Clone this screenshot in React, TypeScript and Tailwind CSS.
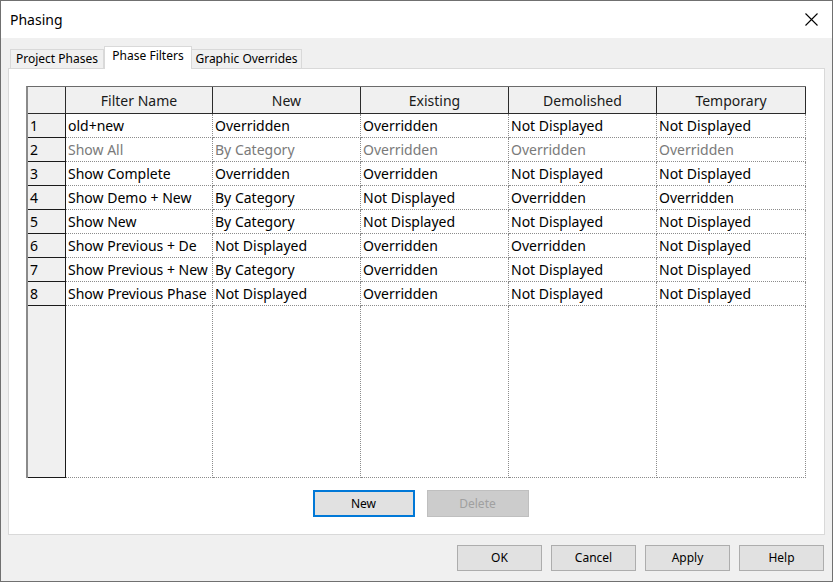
import React from 'react'

type Row = { name: string; cells: string[]; muted?: boolean }

const rows: Row[] = [
  { name: 'old+new', cells: ['Overridden', 'Overridden', 'Not Displayed', 'Not Displayed'] },
  { name: 'Show All', cells: ['By Category', 'Overridden', 'Overridden', 'Overridden'], muted: true },
  { name: 'Show Complete', cells: ['Overridden', 'Overridden', 'Not Displayed', 'Not Displayed'] },
  { name: 'Show Demo + New', cells: ['By Category', 'Not Displayed', 'Overridden', 'Overridden'] },
  { name: 'Show New', cells: ['By Category', 'Not Displayed', 'Not Displayed', 'Not Displayed'] },
  { name: 'Show Previous + De', cells: ['Not Displayed', 'Overridden', 'Overridden', 'Not Displayed'] },
  { name: 'Show Previous + New', cells: ['By Category', 'Overridden', 'Not Displayed', 'Not Displayed'] },
  { name: 'Show Previous Phase', cells: ['Not Displayed', 'Overridden', 'Not Displayed', 'Not Displayed'] },
]

const headers = ['Filter Name', 'New', 'Existing', 'Demolished', 'Temporary']

function DialogButton({ label }: { label: string }) {
  return (
    <button className="w-[85px] h-[26px] bg-[#e1e1e1] border border-[#adadad] text-[12px] text-black">
      {label}
    </button>
  )
}

export default function App() {
  return (
    <div
      className="w-[833px] h-[582px] bg-[#f0f0f0] border border-[#707070] flex flex-col overflow-hidden"
      style={{ fontFamily: '"Noto Sans", "Segoe UI", sans-serif' }}
    >
      {/* Title bar */}
      <div className="h-[37px] bg-white flex items-center justify-between pl-[9px] pr-[14px] shrink-0">
        <span className="text-[14px] text-black">Phasing</span>
        <svg width="13" height="13" viewBox="0 0 13 13" className="text-black">
          <path d="M0.5 0.5 L12.5 12.5 M12.5 0.5 L0.5 12.5" stroke="currentColor" strokeWidth="1.1" />
        </svg>
      </div>

      <div className="px-[7px] flex flex-col">
        {/* Tabs */}
        <div className="h-[30px] flex items-end pl-[2px] text-[12px] text-black">
          <div className="h-[19px] w-[94px] bg-[#f0f0f0] border border-b-0 border-[#d9d9d9] flex items-center justify-center">
            Project Phases
          </div>
          <div className="relative z-10 h-[23px] w-[88px] -mb-px bg-white border border-b-0 border-[#d9d9d9] flex items-start justify-center">
            Phase Filters
          </div>
          <div className="h-[19px] w-[110px] bg-[#f0f0f0] border border-b-0 border-l-0 border-[#d9d9d9] flex items-center justify-center">
            Graphic Overrides
          </div>
        </div>

        {/* Tab panel */}
        <div className="h-[467px] bg-white border border-[#d9d9d9] pt-[17px] pl-[17px] flex flex-col">
          <div className="w-[780px] h-[392px] border-t border-l-2 border-t-[#6b6b6b] border-l-[#8a8a8a] grid grid-cols-[38px_147px_148px_148px_148px_149px] grid-rows-[27px_repeat(8,24px)_1fr] text-[14px]">
            <div className="bg-[#f0f0f0] border-r border-b border-[#2b2b2b]" />
            {headers.map((h) => (
              <div
                key={h}
                className="bg-[#f0f0f0] border-r border-b border-[#2b2b2b] flex items-center justify-center text-[#1a1a1a]"
              >
                {h}
              </div>
            ))}

            {rows.map((row, i) => (
              <React.Fragment key={row.name}>
                <div className="bg-[#f0f0f0] border-r border-b border-[#1a1a1a] flex items-center pl-[2px] text-black">
                  {i + 1}
                </div>
                {[row.name, ...row.cells].map((c, j) => (
                  <div
                    key={j}
                    className={`border-r border-b border-dotted border-[#8c8c8c] flex items-center pl-[2px] whitespace-nowrap overflow-hidden ${
                      row.muted ? 'text-[#7a7a7a]' : 'text-black'
                    }`}
                  >
                    {c}
                  </div>
                ))}
              </React.Fragment>
            ))}

            <div className="bg-[#f0f0f0] border-r border-b border-[#1a1a1a]" />
            {headers.map((h) => (
              <div key={h} className="border-r border-b border-dotted border-[#8c8c8c]" />
            ))}
          </div>

          <div className="flex justify-center gap-[12px] mt-[12px] pr-[9px]">
            <button className="w-[102px] h-[27px] bg-[#e1e1e1] border-2 border-[#0078d7] text-[12px] text-black">
              New
            </button>
            <button className="w-[102px] h-[27px] bg-[#cccccc] border border-[#bfbfbf] text-[12px] text-[#a0a0a0]">
              Delete
            </button>
          </div>
        </div>

        {/* Dialog buttons */}
        <div className="flex justify-end gap-[9px] pt-[10px] pr-[1px]">
          <DialogButton label="OK" />
          <DialogButton label="Cancel" />
          <DialogButton label="Apply" />
          <DialogButton label="Help" />
        </div>
      </div>
    </div>
  )
}
